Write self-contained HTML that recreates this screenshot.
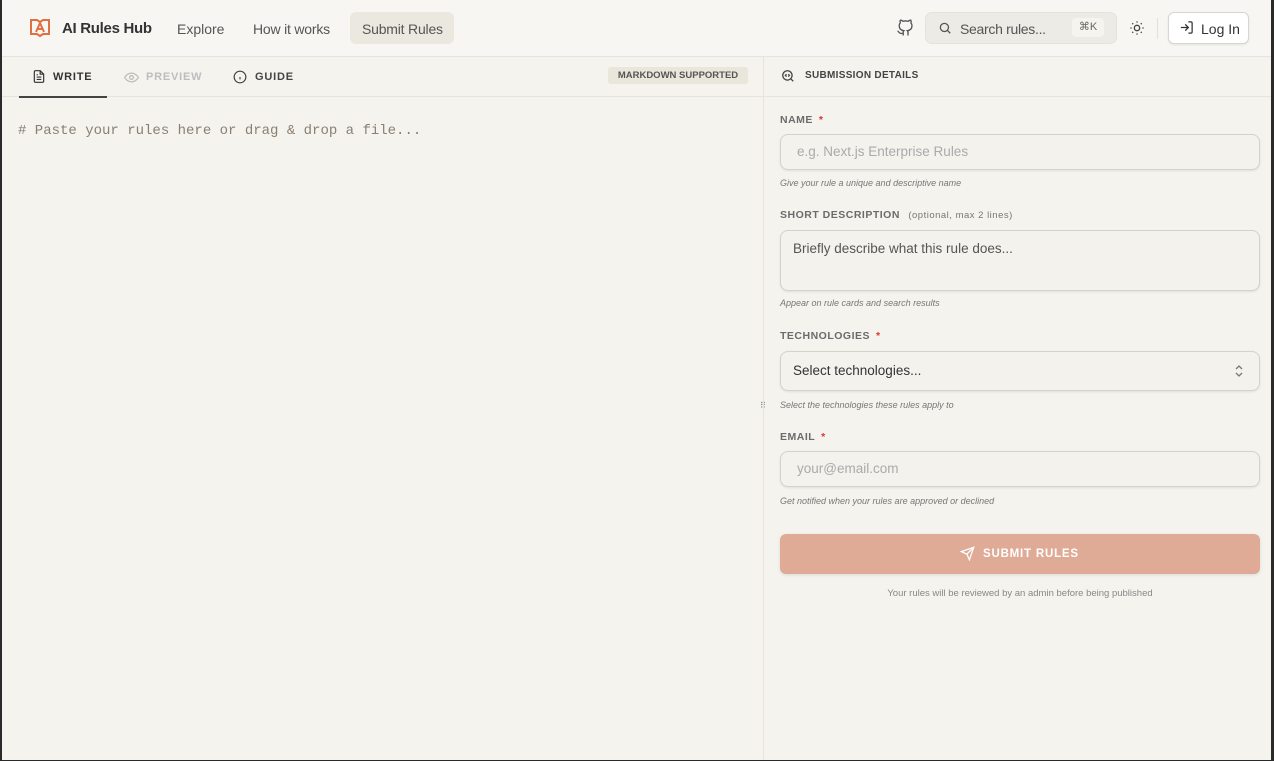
<!DOCTYPE html>
<html><head><meta charset="utf-8"><style>
*{box-sizing:border-box;margin:0;padding:0}
body{width:1274px;height:761px;overflow:hidden;background:#2a2a2a;font-family:"Liberation Sans",sans-serif;position:relative}
#app{position:absolute;left:2px;top:0;width:1269px;height:760px;background:#f4f3ee;overflow:hidden}
.hdr{position:absolute;left:0;top:0;width:100%;height:57px;background:#f7f6f2;border-bottom:1px solid #e6e4dd}
.abs{position:absolute}
.nav{font-size:14px;color:#555;top:21px}
.tabs{position:absolute;left:0;top:57px;width:761px;height:40px;border-bottom:1px solid #e6e4dd}
.tab{position:absolute;top:14px;font-size:11px;font-weight:bold;letter-spacing:.8px}
.right{position:absolute;left:761px;top:57px;width:508px;height:703px;border-left:1px solid #e6e4dd}
.lbl{position:absolute;left:16px;font-size:10.5px;font-weight:bold;color:#6b6b6b;letter-spacing:.5px}
.star{color:#d33;margin-left:6px}
.inp{position:absolute;left:16px;width:480px;border:1px solid #d4d2cb;border-radius:8px;background:#f3f2ed;box-shadow:0 1px 2px rgba(0,0,0,.08);font-size:13.5px;padding-left:16px}
.hint{position:absolute;left:16px;font-size:9px;font-style:italic;color:#777}
</style></head><body><div id="app">
<div class="hdr">
<svg class="abs" style="left:27px;top:17px" width="22" height="22" viewBox="0 0 22 22" fill="none" stroke="#e0703f" stroke-width="2"><path d="M2 3h6l3 2 3-2h6v14h-6l-3 2-3-2H2z"/><path d="M7 15l4-9 4 9M8.5 12h5"/></svg>
<div class="abs" style="left:60px;top:20px;font-size:15px;font-weight:bold;color:#333;letter-spacing:-.3px">AI Rules Hub</div>
<div class="abs nav" style="left:175px">Explore</div>
<div class="abs nav" style="left:251px;letter-spacing:-.2px">How it works</div>
<div class="abs" style="left:348px;top:12px;width:104px;height:32px;background:#ebe8df;border-radius:6px"></div>
<div class="abs nav" style="left:360px;letter-spacing:-.2px">Submit Rules</div>
<svg class="abs" style="left:894px;top:19px" width="18" height="18" viewBox="0 0 24 24" fill="none" stroke="#555" stroke-width="1.8"><path d="M9 19c-5 1.5-5-2.5-7-3m14 6v-3.9a3.4 3.4 0 0 0-.9-2.6c3-.3 6.200-1.500 6.2-6.7a5.2 5.2 0 0 0-1.4-3.6 4.8 4.8 0 0 0-.1-3.6s-1.1-.3-3.7 1.4a12.6 12.6 0 0 0-6.6 0C6.9 1.3 5.8 1.6 5.8 1.6a4.8 4.8 0 0 0-.1 3.6A5.2 5.2 0 0 0 4.3 8.8c0 5.2 3.2 6.4 6.2 6.7a3.4 3.4 0 0 0-.9 2.6V22"/></svg>
<div class="abs" style="left:923px;top:12px;width:192px;height:32px;background:#ecebe5;border-radius:7px;border:1px solid #e4e2db"></div>
<svg class="abs" style="left:936px;top:21px" width="14" height="14" viewBox="0 0 24 24" fill="none" stroke="#555" stroke-width="2.2"><circle cx="11" cy="11" r="7"/><path d="M21 21l-4.5-4.5"/></svg>
<div class="abs" style="left:958px;top:21px;font-size:14px;color:#555;letter-spacing:-.3px">Search rules...</div>
<div class="abs" style="left:1070px;top:18px;width:32px;height:19px;background:#f5f4ef;border-radius:4px;font-size:11px;color:#666;text-align:center;line-height:19px">⌘K</div>
<svg class="abs" style="left:1127px;top:20px" width="16" height="16" viewBox="0 0 24 24" fill="none" stroke="#444" stroke-width="2"><circle cx="12" cy="12" r="4"/><path d="M12 2v2M12 20v2M4.9 4.9l1.4 1.4M17.7 17.7l1.4 1.4M2 12h2M20 12h2M4.9 19.1l1.4-1.4M17.7 6.3l1.4-1.4"/></svg>
<div class="abs" style="left:1155px;top:18px;width:1px;height:21px;background:#e2e0d9"></div>
<div class="abs" style="left:1166px;top:12px;width:81px;height:32px;background:#fff;border:1px solid #d8d6cf;border-radius:6px;box-shadow:0 1px 2px rgba(0,0,0,.08)"></div>
<svg class="abs" style="left:1177px;top:20px" width="15" height="15" viewBox="0 0 24 24" fill="none" stroke="#333" stroke-width="2"><path d="M15 3h4a2 2 0 0 1 2 2v14a2 2 0 0 1-2 2h-4M10 17l5-5-5-5M15 12H3"/></svg>
<div class="abs" style="left:1199px;top:21px;font-size:14px;color:#333">Log In</div>
</div>
<div class="tabs">
<svg class="abs" style="left:30px;top:12px" width="14" height="15" viewBox="0 0 24 24" fill="none" stroke="#333" stroke-width="2"><path d="M14 2H6a2 2 0 0 0-2 2v16a2 2 0 0 0 2 2h12a2 2 0 0 0 2-2V8z"/><path d="M14 2v6h6M8 13h8M8 17h8M8 9h2"/></svg>
<div class="tab" style="left:51px;color:#333">WRITE</div>
<div class="abs" style="left:17px;top:39px;width:88px;height:2px;background:#444"></div>
<svg class="abs" style="left:122px;top:14px" width="15" height="13" viewBox="0 0 24 20" fill="none" stroke="#bbb" stroke-width="2"><path d="M1 10s4-7 11-7 11 7 11 7-4 7-11 7S1 10 1 10z"/><circle cx="12" cy="10" r="3"/></svg>
<div class="tab" style="left:144px;color:#bdbdbd">PREVIEW</div>
<svg class="abs" style="left:231px;top:13px" width="14" height="14" viewBox="0 0 24 24" fill="none" stroke="#444" stroke-width="2"><circle cx="12" cy="12" r="10"/><path d="M12 16v-4M12 8h.01"/></svg>
<div class="tab" style="left:253px;color:#444">GUIDE</div>
<div class="abs" style="left:606px;top:10px;width:140px;height:17px;background:#e9e6dc;border-radius:3px;font-size:9.5px;font-weight:bold;color:#555;text-align:center;line-height:17px">MARKDOWN SUPPORTED</div>
</div>
<div class="abs" style="left:16px;top:123px;font-family:'Liberation Mono',monospace;font-size:14px;color:#8a7f72">#&nbsp;Paste your rules here or drag &amp; drop a file...</div>
<div class="abs" style="left:758px;top:401px;font-size:8px;color:#777">⠿</div>
<div class="right">
<div class="abs" style="left:0;top:0;width:100%;height:40px;border-bottom:1px solid #e6e4dd"></div>
<svg class="abs" style="left:17px;top:12px" width="14" height="14" viewBox="0 0 24 24" fill="none" stroke="#444" stroke-width="2.2"><circle cx="11" cy="11" r="8"/><path d="M21 21l-4-4M9.5 9l-2 2 2 2M12.5 9l2 2-2 2"/></svg>
<div class="abs" style="left:41px;top:13px;font-size:10px;font-weight:bold;color:#444;letter-spacing:.3px">SUBMISSION DETAILS</div>
<div class="lbl" style="top:57px">NAME<span class="star">*</span></div>
<div class="inp" style="top:77px;height:36px;line-height:34px;color:#aaa">e.g. Next.js Enterprise Rules</div>
<div class="hint" style="top:121px">Give your rule a unique and descriptive name</div>
<div class="lbl" style="top:152px">SHORT DESCRIPTION <span style="font-weight:normal;font-size:9.5px;margin-left:5px;color:#777">(optional, max 2 lines)</span></div>
<div class="inp" style="top:173px;height:61px;padding-top:10px;padding-left:12px;color:#555">Briefly describe what this rule does...</div>
<div class="hint" style="top:241px">Appear on rule cards and search results</div>
<div class="lbl" style="top:273px">TECHNOLOGIES<span class="star">*</span></div>
<div class="inp" style="top:294px;height:40px;line-height:38px;padding-left:12px;color:#333">Select technologies...</div>
<svg class="abs" style="left:470px;top:307px" width="10" height="14" viewBox="0 0 10 14" fill="none" stroke="#777" stroke-width="1.3"><path d="M2 5l3-3 3 3M2 9l3 3 3-3"/></svg>
<div class="hint" style="top:343px">Select the technologies these rules apply to</div>
<div class="lbl" style="top:374px">EMAIL<span class="star">*</span></div>
<div class="inp" style="top:394px;height:36px;line-height:34px;color:#aaa">your@email.com</div>
<div class="hint" style="top:439px">Get notified when your rules are approved or declined</div>
<div class="abs" style="left:16px;top:477px;width:480px;height:40px;background:#dfab96;border-radius:6px;box-shadow:0 1px 3px rgba(0,0,0,.1)"></div>
<svg class="abs" style="left:196px;top:489px" width="15" height="15" viewBox="0 0 24 24" fill="none" stroke="#fff" stroke-width="2"><path d="M22 2L11 13M22 2l-7 20-4-9-9-4z"/></svg>
<div class="abs" style="left:219px;top:491px;font-size:11.5px;font-weight:bold;color:#fff;letter-spacing:.8px">SUBMIT RULES</div>
<div class="abs" style="left:16px;top:531px;width:480px;text-align:center;font-size:9.5px;color:#888">Your rules will be reviewed by an admin before being published</div>
</div>
</div></body></html>
